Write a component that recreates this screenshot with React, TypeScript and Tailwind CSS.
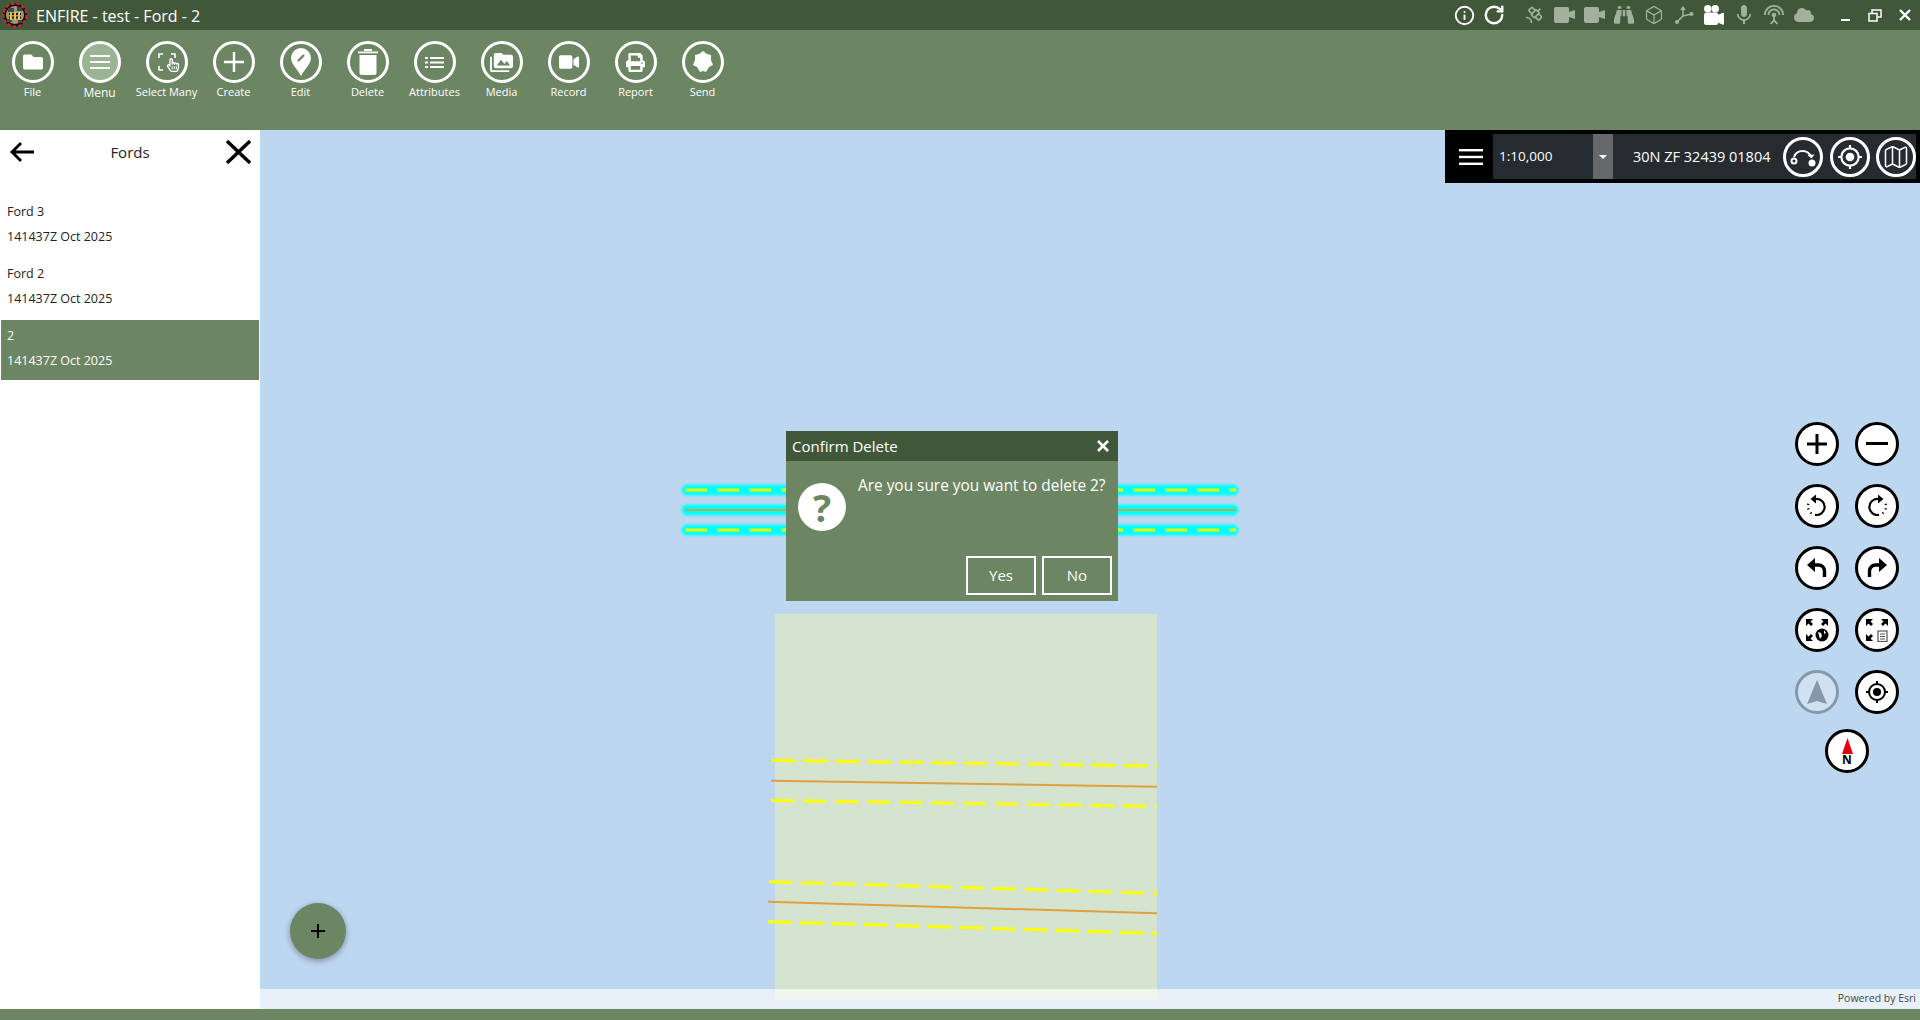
import type { ReactNode } from 'react'
import { FaFolder, FaVideo, FaPrint, FaBinoculars, FaCloud, FaRegHandPointer } from 'react-icons/fa'
import { MdPermMedia, MdMic, MdSettingsInputAntenna } from 'react-icons/md'
import { BsCameraReelsFill } from 'react-icons/bs'
import { Info, RotateCw, Satellite, Box, Map as MapIcon } from 'lucide-react'

const font = { fontFamily: '"Open Sans", "Noto Sans", sans-serif' }

function Logo() {
  return (
    <svg width="26" height="26" viewBox="0 0 26 26">
      <circle cx="13" cy="13" r="12" fill="#111" />
      <circle cx="13" cy="13" r="11.500" fill="none" stroke="#d02a20" strokeWidth="2" strokeDasharray="4 1.500" />
      <circle cx="13" cy="13" r="9" fill="#9a968a" />
      <path d="M6 6h6v4H6zM15 5h5v4h-5zM5 17h5v3H5zM16 18h4v3h-4z" fill="#4a4840" />
      <path d="M7 11h12v2H7zM7 14.500h12v2H7z" fill="#1a1a14" />
      <path d="M8 10h2v8H8zM12 10h2v8h-2zM16 10h2v8h-2z" fill="#e8c838" />
    </svg>
  )
}

function CamSmall() {
  return (
    <svg width="21" height="16" viewBox="0 0 21 16" fill="#a3b09d">
      <rect x="0" y="0" width="15" height="16" rx="2" />
      <path d="M15 5l6-2v9l-6-2z" />
    </svg>
  )
}

function AxisIcon() {
  return (
    <svg width="20" height="20" viewBox="0 0 20 20" fill="#a3b09d" stroke="#a3b09d" strokeWidth="1.6">
      <path d="M9 2v9L3 17M9 11l8-2" fill="none" />
      <path d="M6 5l3-4 3 4z" stroke="none" />
      <circle cx="3" cy="17" r="2" stroke="none" />
      <circle cx="17.5" cy="9" r="2" stroke="none" />
    </svg>
  )
}

const ribbon: { label: string; icon: ReactNode }[] = [
  { label: 'File', icon: <FaFolder size={20} /> },
  {
    label: 'Menu',
    icon: (
      <svg width="20" height="14" viewBox="0 0 20 14" fill="white">
        <rect y="0" width="20" height="2" />
        <rect y="6" width="20" height="2" />
        <rect y="12" width="20" height="2" />
      </svg>
    ),
  },
  {
    label: 'Select Many',
    icon: (
      <span className="relative flex items-center justify-center">
        <svg width="18" height="18" viewBox="0 0 18 18" fill="none" stroke="white" strokeWidth="1.6">
          <path d="M1 5V1h4M13 1h4v4M1 13v4h4" />
        </svg>
        <FaRegHandPointer size={14} className="absolute left-[8px] top-[5px]" />
      </span>
    ),
  },
  {
    label: 'Create',
    icon: (
      <svg width="20" height="20" viewBox="0 0 20 20" stroke="white" strokeWidth="2.4">
        <path d="M10 0v20M0 10h20" />
      </svg>
    ),
  },
  {
    label: 'Edit',
    icon: (
      <svg width="20" height="28" viewBox="0 0 20 28">
        <path d="M10 28C7 22 0 16 0 10a10 10 0 0 1 20 0c0 6-7 12-10 18z" fill="white" />
        <path d="M7 13l6-6" stroke="#6c8563" strokeWidth="2.4" />
      </svg>
    ),
  },
  {
    label: 'Delete',
    icon: (
      <svg width="20" height="26" viewBox="0 0 20 26" fill="white">
        <rect x="0" y="2.5" width="20" height="1.8" />
        <rect x="6" y="0" width="8" height="2" />
        <path d="M1.5 6h17v18a2 2 0 0 1-2 2h-13a2 2 0 0 1-2-2z" />
      </svg>
    ),
  },
  {
    label: 'Attributes',
    icon: (
      <svg width="19" height="11" viewBox="0 0 19 11" fill="white">
        <rect y="0" width="3" height="2" />
        <rect x="5" y="0" width="14" height="2" />
        <rect y="4.500" width="3" height="2" />
        <rect x="5" y="4.500" width="14" height="2" />
        <rect y="9" width="3" height="2" />
        <rect x="5" y="9" width="14" height="2" />
      </svg>
    ),
  },
  { label: 'Media', icon: <MdPermMedia size={23} /> },
  { label: 'Record', icon: <FaVideo size={20} /> },
  { label: 'Report', icon: <FaPrint size={19} /> },
  {
    label: 'Send',
    icon: (
      <svg width="20" height="22" viewBox="0 0 20 22" fill="white">
        <path d="M10 0l4 3 4 1 0 5 2 5-4 2-3 5-3-1-3 1-3-5-4-2 2-5 0-5 4-1z" />
      </svg>
    ),
  },
]

function RibbonButton({ label, icon }: { label: string; icon: ReactNode }) {
  const isMenu = label === 'Menu'
  return (
    <div className="flex w-[67px] flex-col items-center">
      <div
        className={`flex h-[42px] w-[42px] items-center justify-center rounded-full border-[3px] border-white text-white ${
          isMenu ? 'bg-[#9ab392]' : ''
        }`}
      >
        {icon}
      </div>
      <span className={`whitespace-nowrap text-white ${isMenu ? 'mt-[1px] text-[12px] leading-[18px]' : 'text-[11px] leading-[18px]'}`}>
        {label}
      </span>
    </div>
  )
}

function MapRound({ children, muted }: { children: ReactNode; muted?: boolean }) {
  return (
    <div
      className={`flex h-[44px] w-[44px] items-center justify-center rounded-full border-[3px] ${
        muted ? 'border-[#8499ab] bg-[#d0e1f2] text-[#8499ab]' : 'border-black bg-white text-black'
      }`}
    >
      {children}
    </div>
  )
}

function ExpandArrows() {
  return (
    <path
      d="M1 1h7L5.5 3.5 8 6 6 8 3.500 5.500 1 8zM23 1v7l-2.500-2.500L18 8l-2-2 2.500-2.500L16 1zM1 23v-7l2.500 2.500L6 16l2 2-2.500 2.500L8 23z"
      fill="black"
    />
  )
}

function RotateIcon({ flip }: { flip?: boolean }) {
  return (
    <svg width="24" height="24" viewBox="0 0 24 24" className={flip ? '-scale-x-100' : ''} fill="none" stroke="black" strokeWidth="2.2">
      <path d="M11 5a8 8 0 1 1-1 15.800" />
      <path d="M11 0.500v9L5.500 5z" fill="black" stroke="none" />
      <path d="M6.500 19.500l-1-.8M3.500 15.500l-.4-1.300M3 11l.3-1.300" />
    </svg>
  )
}

function UndoIcon({ flip }: { flip?: boolean }) {
  return (
    <svg width="22" height="20" viewBox="0 0 22 20" className={flip ? '-scale-x-100' : ''} fill="none" stroke="black" strokeWidth="3.400">
      <path d="M6 7h6.500a6 6 0 0 1 6 6v6" />
      <path d="M9 0v14L1 7z" fill="black" stroke="none" />
    </svg>
  )
}

function Target({ size, color }: { size: number; color: string }) {
  return (
    <svg width={size} height={size} viewBox="0 0 24 24" fill="none" stroke={color} strokeWidth="2">
      <circle cx="12" cy="12" r="8" />
      <circle cx="12" cy="12" r="4" fill={color} stroke="none" />
      <path d="M12 1v3M12 20v3M1 12h3M20 12h3" />
    </svg>
  )
}

const listItems = [
  { name: 'Ford 3', selected: false },
  { name: 'Ford 2', selected: false },
  { name: '2', selected: true },
]

export default function App() {
  return (
    <div className="flex h-[1020px] w-[1920px] flex-col overflow-hidden bg-[#6c8563]" style={font}>
      {/* title bar */}
      <div className="flex h-[30px] shrink-0 items-center bg-[#41573a] text-white">
        <div className="ml-[2px] mr-[8px]">
          <Logo />
        </div>
        <span className="pt-[1px] text-[16px]">ENFIRE - test - Ford - 2</span>
        <div className="ml-auto flex items-center text-[#a3b09d]">
          <div className="flex w-[30px] justify-center text-white"><Info size={21} strokeWidth={2.2} /></div>
          <div className="flex w-[30px] justify-center text-white"><RotateCw size={22} strokeWidth={2.6} /></div>
          <div className="w-[10px]" />
          <div className="flex w-[30px] justify-center"><Satellite size={20} /></div>
          <div className="flex w-[30px] justify-center"><CamSmall /></div>
          <div className="flex w-[30px] justify-center"><CamSmall /></div>
          <div className="flex w-[30px] justify-center"><FaBinoculars size={20} /></div>
          <div className="flex w-[30px] justify-center"><Box size={20} strokeWidth={1.5} /></div>
          <div className="flex w-[30px] justify-center"><AxisIcon /></div>
          <div className="flex w-[30px] justify-center text-white"><BsCameraReelsFill size={20} /></div>
          <div className="flex w-[30px] justify-center"><MdMic size={24} /></div>
          <div className="flex w-[30px] justify-center"><MdSettingsInputAntenna size={22} /></div>
          <div className="flex w-[30px] justify-center"><FaCloud size={20} /></div>
          <div className="w-[11px]" />
          <div className="flex w-[30px] justify-center pt-[10px]"><div className="h-[2px] w-[9px] bg-white" /></div>
          <div className="flex w-[30px] justify-center">
            <svg width="14" height="13" viewBox="0 0 14 13" fill="none" stroke="white" strokeWidth="1.5">
              <rect x="1" y="4.500" width="8" height="7.500" />
              <path d="M4 4V1h9v7h-3.500" />
            </svg>
          </div>
          <div className="flex w-[30px] justify-center">
            <svg width="12" height="12" viewBox="0 0 12 12" stroke="white" strokeWidth="2.4">
              <path d="M1 1l10 10M11 1L1 11" />
            </svg>
          </div>
        </div>
      </div>

      {/* ribbon */}
      <div className="-ml-[1px] flex h-[100px] shrink-0 items-start pt-[11px]">
        {ribbon.map((b) => (
          <RibbonButton key={b.label} label={b.label} icon={b.icon} />
        ))}
      </div>

      <div className="flex min-h-0 flex-1">
        {/* side panel */}
        <div className="w-[260px] shrink-0 bg-white text-[#222]">
          <div className="flex h-[44px] items-center justify-between pl-[10px] pr-[9px]">
            <svg width="24" height="22" viewBox="0 0 24 22" fill="none" stroke="black" strokeWidth="3">
              <path d="M24 11H2M11 2l-9 9 9 9" />
            </svg>
            <span className="text-[15px]">Fords</span>
            <svg width="25" height="24" viewBox="0 0 25 24" stroke="black" strokeWidth="3.400">
              <path d="M1 1l23 22M24 1L1 23" />
            </svg>
          </div>
          <div className="mt-[22px] flex flex-col px-[1px]">
            {listItems.map((item) => (
              <div
                key={item.name}
                className={`flex flex-col px-[6px] pt-[4px] text-[12.500px] leading-[24.500px] ${
                  item.selected ? 'h-[60px] bg-[#6c8563] text-white' : 'h-[62px]'
                }`}
              >
                <span>{item.name}</span>
                <span>141437Z Oct 2025</span>
              </div>
            ))}
          </div>
        </div>

        {/* map */}
        <div className="relative flex-1 bg-[#bed7f1]">
          <svg className="absolute inset-0" width="1660" height="879" viewBox="260 130 1660 879" fill="none">
            <rect x="775" y="614" width="382" height="386" fill="#d4e4cf" />
            <g className="blur-[1px]" strokeLinecap="round" stroke="#00ffff" strokeWidth="11">
              <path d="M687 490H1233M687 510H1233M687 530H1233" />
            </g>
            <path d="M685 490H1236M685 530H1236" stroke="#e6ff00" strokeWidth="3" strokeDasharray="22 10" />
            <path d="M685 510H1236" stroke="#c0a848" strokeWidth="2" />
            <g stroke="#ffff00" strokeWidth="3" strokeDasharray="23.300 8.700">
              <path d="M772 760.300L1157 766" />
              <path d="M771 800.300L1157 806.300" />
              <path d="M769 881.700L1157.700 893.300" />
              <path d="M768 921.700L1157 933.300" />
            </g>
            <g stroke="#e0a040" strokeWidth="2">
              <path d="M771 780.700L1157 786.700" />
              <path d="M768 901.700L1157 913.300" />
            </g>
          </svg>

          {/* scale and coordinates bar */}
          <div className="absolute right-0 top-0 flex h-[53px] w-[475px] items-stretch bg-black p-[4px] text-white">
            <div className="flex w-[44px] shrink-0 items-center justify-center">
              <svg width="24" height="16" viewBox="0 0 24 16" fill="white">
                <rect y="0" width="24" height="2.400" />
                <rect y="6.800" width="24" height="2.400" />
                <rect y="13.600" width="24" height="2.400" />
              </svg>
            </div>
            <div className="flex flex-1 items-center bg-[#262b30]">
              <span className="ml-[6px] w-[94px] shrink-0 text-[13.500px]">1:10,000</span>
              <div className="flex h-full w-[20px] shrink-0 items-center justify-center bg-[#666869]">
                <div className="h-0 w-0 border-x-[4px] border-t-[4px] border-x-transparent border-t-white" />
              </div>
              <span className="ml-[20px] w-[150px] shrink-0 whitespace-nowrap text-[14.500px]">30N ZF 32439 01804</span>
              <div className="flex items-center gap-[6.500px]">
                <div className="flex h-[40px] w-[40px] items-center justify-center rounded-full border-[3px] border-white">
                  <svg width="26" height="22" viewBox="0 0 26 22" fill="none" stroke="white" strokeWidth="2">
                    <path d="M4 11a9 9 0 0 1 17 0" />
                    <path d="M17.500 9l4 3.500 3-4z" fill="white" stroke="none" />
                    <circle cx="4" cy="15" r="2.500" />
                    <circle cx="22" cy="17" r="3.500" fill="white" stroke="none" />
                  </svg>
                </div>
                <div className="flex h-[40px] w-[40px] items-center justify-center rounded-full border-[3px] border-white">
                  <Target size={26} color="white" />
                </div>
                <div className="flex h-[40px] w-[40px] items-center justify-center rounded-full border-[3px] border-white">
                  <MapIcon size={28} strokeWidth={1.3} />
                </div>
              </div>
            </div>
          </div>

          {/* map tools */}
          <div className="absolute right-[21px] top-[292px] grid w-[104px] grid-cols-2 gap-x-[16px] gap-y-[18px]">
            <MapRound>
              <svg width="22" height="22" viewBox="0 0 22 22" stroke="black" strokeWidth="3"><path d="M11 1v20M1 11h20" /></svg>
            </MapRound>
            <MapRound>
              <svg width="22" height="4" viewBox="0 0 22 4" fill="black"><rect width="22" height="3" /></svg>
            </MapRound>
            <MapRound><RotateIcon /></MapRound>
            <MapRound><RotateIcon flip /></MapRound>
            <MapRound><UndoIcon /></MapRound>
            <MapRound><UndoIcon flip /></MapRound>
            <MapRound>
              <svg width="24" height="24" viewBox="0 0 24 24">
                <ExpandArrows />
                <circle cx="17" cy="17" r="6.500" fill="black" />
                <path d="M13 14l3 1 1 3-2 3zM19 12l2 3-2 1z" fill="white" />
              </svg>
            </MapRound>
            <MapRound>
              <svg width="24" height="24" viewBox="0 0 24 24">
                <ExpandArrows />
                <rect x="13" y="13" width="9" height="10.500" fill="white" stroke="#555" strokeWidth="1.200" />
                <path d="M15 16h5M15 18.500h5M15 21h5" stroke="#555" />
              </svg>
            </MapRound>
            <MapRound muted>
              <svg width="20" height="24" viewBox="0 0 20 24" fill="#8499ab"><path d="M10 0l10 24-10-3-10 3z" /></svg>
            </MapRound>
            <MapRound><Target size={24} color="black" /></MapRound>
            <div className="col-span-2 -mt-[3px] flex justify-center">
              <MapRound>
                <div className="flex flex-col items-center">
                  <svg width="11" height="16" viewBox="0 0 11 16" fill="#e00010"><path d="M5.500 0L11 16H0z" /></svg>
                  <span className="text-[12px] font-bold leading-[11px] text-black">N</span>
                </div>
              </MapRound>
            </div>
          </div>

          {/* add button */}
          <div className="absolute left-[30px] top-[773px] flex h-[56px] w-[56px] items-center justify-center rounded-full bg-[#6c8563] shadow-[0_2px_6px_rgba(0,0,0,0.35)]">
            <svg width="14" height="14" viewBox="0 0 14 14" stroke="black" strokeWidth="2"><path d="M7 0v14M0 7h14" /></svg>
          </div>

          {/* attribution */}
          <div className="absolute bottom-0 left-0 right-0 flex h-[20px] items-center justify-end bg-white/65 pr-[4px] text-[10.500px] text-[#444]">
            Powered by Esri
          </div>

          {/* confirm dialog */}
          <div className="absolute left-[526px] top-[301px] flex h-[170px] w-[332px] flex-col bg-[#6c8563] text-white">
            <div className="flex h-[30px] shrink-0 items-center justify-between bg-[#41573a] pl-[6px] pr-[9px]">
              <span className="pt-[1px] text-[15px]">Confirm Delete</span>
              <svg width="12" height="12" viewBox="0 0 12 12" stroke="white" strokeWidth="2.600"><path d="M1 1l10 10M11 1L1 11" /></svg>
            </div>
            <div className="flex flex-1 pl-[12px] pr-[6px] pt-[12px]">
              <div className="mt-[10px] flex h-[48px] w-[48px] shrink-0 items-center justify-center rounded-full bg-white text-[38px] font-bold leading-none text-[#6c8563]">
                ?
              </div>
              <span className="ml-[12px] mt-[2px] whitespace-nowrap text-[15.400px] leading-[22px]">Are you sure you want to delete 2?</span>
            </div>
            <div className="mb-[6px] flex justify-end gap-[6px] pr-[6px]">
              <div className="flex h-[39px] w-[70px] items-center justify-center border-[2px] border-white text-[15px]">Yes</div>
              <div className="flex h-[39px] w-[70px] items-center justify-center border-[2px] border-white text-[15px]">No</div>
            </div>
          </div>
        </div>
      </div>

      {/* bottom bar */}
      <div className="h-[11px] shrink-0 bg-[#6c8563]" />
    </div>
  )
}
